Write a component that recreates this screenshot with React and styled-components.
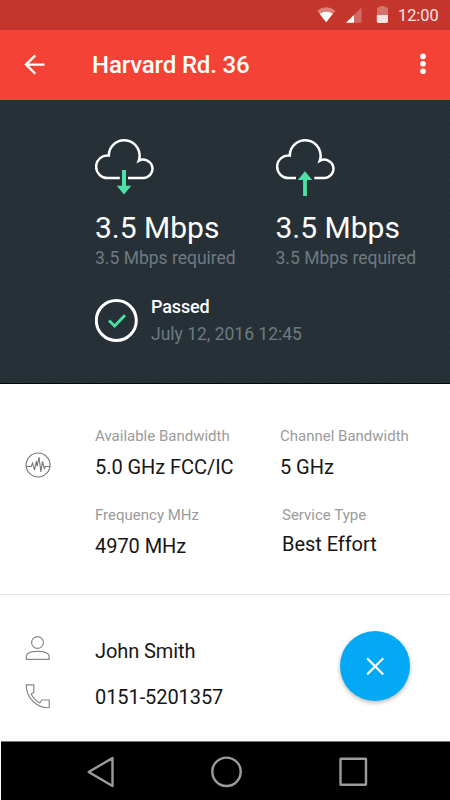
import React from "react";
import styled, { createGlobalStyle } from "styled-components";

const GlobalStyle = createGlobalStyle`
  *, *::before, *::after { box-sizing: border-box; }
  body { margin: 0; background: #fff; }
  button { appearance: none; border: 0; padding: 0; background: none; color: inherit; font: inherit; cursor: pointer; }
  svg { display: block; flex: none; }
`;

const Screen = styled.div`
  position: relative;
  display: flex;
  flex-direction: column;
  width: 450px;
  height: 800px;
  overflow: hidden;
  background: #fff;
  font-family: Roboto, "Liberation Sans", sans-serif;
`;

const StatusBar = styled.div`
  display: flex;
  align-items: center;
  justify-content: flex-end;
  height: 30px;
  padding-right: 11px;
  background: #c4362c;
  color: #f9e6e4;
`;

const Clock = styled.span`
  width: 41px;
  margin-left: 9px;
  font-size: 16.3px;
  line-height: 31px;
  white-space: nowrap;
`;

const AppBar = styled.header`
  display: flex;
  align-items: center;
  height: 70px;
  padding: 0 20px 0 23px;
  background: #f44336;
  color: #fff;
`;

const Title = styled.h1`
  flex: 1;
  margin: 0 0 0 45px;
  font-size: 24px;
  font-weight: 500;
  line-height: 68px;
  letter-spacing: -0.15px;
`;

const Summary = styled.section`
  height: 284px;
  padding: 38px 0 0 95px;
  border-bottom: 1px solid #05080a;
  background:
    repeating-linear-gradient(63deg, rgba(255, 255, 255, 0.01) 0 1px, transparent 1px 3px),
    repeating-linear-gradient(-27deg, rgba(0, 0, 0, 0.04) 0 1px, transparent 1px 3px),
    #263037;
  color: #fff;
`;

const Speeds = styled.div`
  display: grid;
  grid-template-columns: 180.5px 1fr;
`;

const SpeedValue = styled.div`
  margin-top: 12px;
  font-size: 30px;
  line-height: 36px;
`;

const Muted = styled.div`
  color: #6f7a82;
  font-size: 17.5px;
  line-height: ${(p) => p.$line}px;
`;

const Result = styled.div`
  display: flex;
  gap: 12px;
  margin-top: 23px;
`;

const ResultIcon = styled.div`
  margin-top: 5px;
`;

const ResultTitle = styled.div`
  font-size: 18px;
  font-weight: 500;
  line-height: 27px;
  letter-spacing: -0.15px;
`;

const Details = styled.section`
  display: flex;
  height: 211px;
  padding: 42px 0 0 25px;
  border-bottom: 1px solid #e4e4e4;
`;

const DetailIcon = styled.div`
  width: 70px;
  padding-top: 26px;
`;

const DetailColumn = styled.div`
  display: flex;
  flex-direction: column;
  width: ${(p) => p.$width}px;
`;

const Field = styled.div`
  height: 79px;
  padding-left: ${(p) => p.$inset || 0}px;
`;

const Label = styled.div`
  color: #9b9b9b;
  font-size: 15px;
  line-height: 20px;
`;

const Value = styled.div`
  margin-top: ${(p) => p.$gap}px;
  color: #161616;
  font-size: 20px;
  line-height: 28px;
  letter-spacing: -0.05px;
`;

const Contacts = styled.section`
  flex: 1;
  padding: 33px 0 0 25px;
`;

const ContactRow = styled.div`
  display: grid;
  grid-template-columns: 70px 1fr;
  height: 46px;
  color: #161616;
  font-size: 20px;
  line-height: 47px;
  letter-spacing: -0.08px;
`;

const ContactIcon = styled.div`
  padding-top: ${(p) => p.$top}px;
`;

const CloseFab = styled.button`
  position: absolute;
  top: 631px;
  left: 340px;
  display: grid;
  place-items: center;
  width: 70px;
  height: 70px;
  border-radius: 50%;
  background: #03a9f4;
  box-shadow: 0 2px 4px rgba(0, 0, 0, 0.28);
`;

const NavBar = styled.nav`
  display: flex;
  align-items: center;
  justify-content: space-between;
  height: 59px;
  margin-left: 1px;
  padding: 1px 81px 0 84px;
  border-top: 1px solid #777;
  background: #000;
`;

function StatusIcons() {
  return (
    <svg width="74" height="30" viewBox="315 0 74 30">
      <path d="M317.2 10.7Q326.2 4 335.2 10.7L326.2 22.2Z" fill="#dc827b" />
      <path d="M319.6 13.7Q326.2 9.8 332.8 13.7L326.2 22.2Z" fill="#fff" />
      <path d="M361.7 7.5V22.7H346Z" fill="#d06a62" />
      <path d="M354 15V22.7H346Z" fill="#fff" />
      <path d="M377 9q0-1.7 1.5-1.7h1.2V6h5v1.3H386.5q1.5 0 1.5 1.7v6.2h-11z" fill="#d5746c" />
      <path d="M376.8 15h11.2v6.3q0 1.7-1.7 1.7h-7.8q-1.7 0-1.7-1.7z" fill="#f7e3e1" />
    </svg>
  );
}

function CloudIcon({ up }) {
  const [leftEnd, rightStart] = up ? [20, 38.3] : [24.8, 33];
  return (
    <svg width="60" height="60" viewBox="0 0 60 60" fill="none">
      <path
        d={`M${leftEnd} 40H13A11.3 11.3 0 1 1 13.8 17.5A15.4 15.4 0 1 1 43.7 22.8A9.2 9.2 0 1 1 48.4 40H${rightStart}`}
        stroke="#fff"
        strokeWidth="2.5"
      />
      {up ? (
        <path d="M27.1 58V42H21.8L29 33.2L36.2 42H30.9V58Z" fill="#4ce2a6" />
      ) : (
        <path d="M27 32H31V47.7H36.2L29 56.5L21.8 47.7H27Z" fill="#4ce2a6" />
      )}
    </svg>
  );
}

function Speed({ up }) {
  return (
    <div>
      <CloudIcon up={up} />
      <SpeedValue>3.5 Mbps</SpeedValue>
      <Muted $line={24}>3.5 Mbps required</Muted>
    </div>
  );
}

export default function App() {
  return (
    <>
      <GlobalStyle />
      <Screen>
        <StatusBar>
          <StatusIcons />
          <Clock>12:00</Clock>
        </StatusBar>
        <AppBar>
          <button aria-label="Back">
            <svg width="24" height="24" viewBox="0 0 24 24" fill="none" stroke="#fff" strokeWidth="2.3">
              <path d="M21.5 11.6H3M12.3 2.4L3 11.6L12.3 20.8" />
            </svg>
          </button>
          <Title>Harvard Rd. 36</Title>
          <button aria-label="More options">
            <svg width="14" height="24" viewBox="0 0 14 24" fill="#fff">
              <circle cx="7" cy="3.4" r="2.8" />
              <circle cx="7" cy="10.8" r="2.8" />
              <circle cx="7" cy="18.3" r="2.8" />
            </svg>
          </button>
        </AppBar>
        <Summary>
          <Speeds>
            <Speed />
            <Speed up />
          </Speeds>
          <Result>
            <ResultIcon>
              <svg width="44" height="44" viewBox="0 0 44 44" fill="none">
                <circle cx="21.3" cy="22.5" r="20" stroke="#fff" strokeWidth="3" />
                <path d="M14 22.5L19.6 28L30 17.2" stroke="#4ce2a6" strokeWidth="2.8" />
              </svg>
            </ResultIcon>
            <div>
              <ResultTitle>Passed</ResultTitle>
              <Muted $line={28}>July 12, 2016 12:45</Muted>
            </div>
          </Result>
        </Summary>
        <Details>
          <DetailIcon>
            <svg width="26" height="26" viewBox="0 0 26 26" fill="none" stroke="#777" strokeWidth="1.1">
              <circle cx="13.1" cy="13" r="12" />
              <path d="M1.5 14.5H6.2L7.6 11.2L9.6 18L11.3 9.2L12.2 14.5L14 5L15.9 20L17.5 9.5L19.3 16.5L20.4 14.5H25" />
            </svg>
          </DetailIcon>
          <DetailColumn $width={185}>
            <Field>
              <Label>Available Bandwidth</Label>
              <Value $gap={7}>5.0 GHz FCC/IC</Value>
            </Field>
            <Field>
              <Label>Frequency MHz</Label>
              <Value $gap={7}>4970 MHz</Value>
            </Field>
          </DetailColumn>
          <DetailColumn $width={170}>
            <Field>
              <Label>Channel Bandwidth</Label>
              <Value $gap={7}>5 GHz</Value>
            </Field>
            <Field $inset={2}>
              <Label>Service Type</Label>
              <Value $gap={5}>Best Effort</Value>
            </Field>
          </DetailColumn>
        </Details>
        <Contacts>
          <ContactRow>
            <ContactIcon $top={8}>
              <svg width="25" height="25" viewBox="0 0 25 25" fill="none" stroke="#888" strokeWidth="1.2">
                <circle cx="12.5" cy="6.5" r="5.9" />
                <path d="M1.3 23.3V20.5C1.3 16.5 7 15.3 12.7 15.3S24.1 16.5 24.1 20.5V23.3Z" />
              </svg>
            </ContactIcon>
            John Smith
          </ContactRow>
          <ContactRow>
            <ContactIcon $top={10}>
              <svg width="25" height="25" viewBox="0 0 25 25" fill="none" stroke="#888" strokeWidth="1.2">
                <path d="M1.2 .8H8.8V8.2L6.2 9.9Q8.9 15.2 14.7 19L17 16H24.2V23.7Q15.6 24.2 9 18.3Q1.2 11.6 1.2 .8Z" />
              </svg>
            </ContactIcon>
            0151-5201357
          </ContactRow>
        </Contacts>
        <NavBar>
          <svg width="30" height="34" viewBox="0 0 30 34" fill="none" stroke="#9c9c9c" strokeWidth="2.4">
            <path d="M27.5 3V31L3.7 17Z" strokeLinejoin="round" />
          </svg>
          <svg width="34" height="34" viewBox="0 0 34 34" fill="none" stroke="#9c9c9c" strokeWidth="2.4">
            <circle cx="17.5" cy="16.8" r="14.2" />
          </svg>
          <svg width="32" height="34" viewBox="0 0 32 34" fill="none" stroke="#9c9c9c" strokeWidth="2.4">
            <rect x="3.5" y="3.7" width="25.5" height="26" rx="0.5" />
          </svg>
        </NavBar>
        <CloseFab aria-label="Close">
          <svg width="18" height="18" viewBox="0 0 18 18" fill="none" stroke="#fff" strokeWidth="2.3" strokeLinecap="round">
            <path d="M1.8 2L16.5 16.7M16.5 2L1.8 16.7" />
          </svg>
        </CloseFab>
      </Screen>
    </>
  );
}
